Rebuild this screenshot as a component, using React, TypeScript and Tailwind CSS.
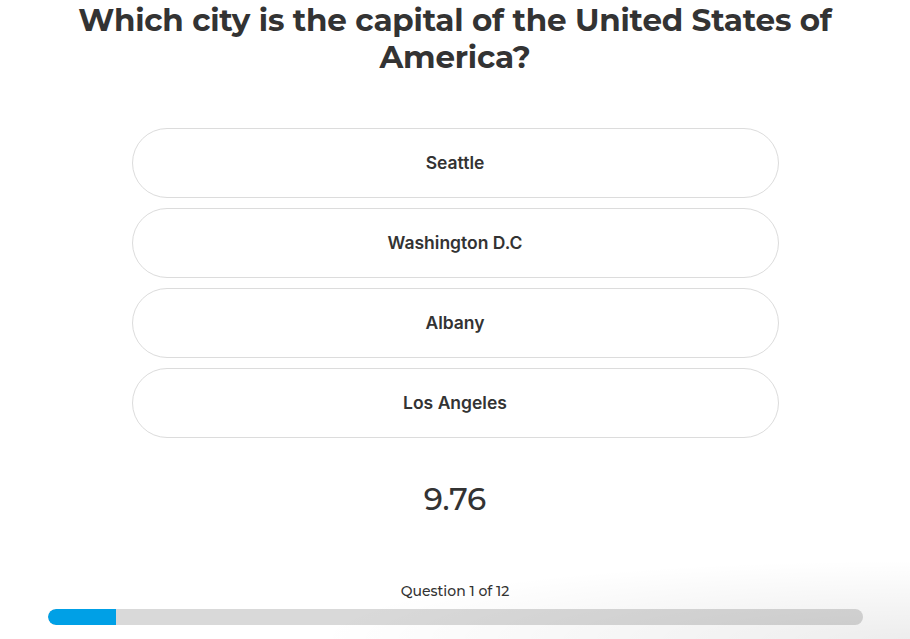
const answers = ['Seattle', 'Washington D.C', 'Albany', 'Los Angeles'];

const App = () => {
  const current = 1;
  const total = 12;

  return (
    <div className="relative h-[639px] w-[910px] overflow-hidden bg-white text-[#333]">
      <h1 className="px-10 pt-[2px] text-center font-['Montserrat','Open_Sans',sans-serif] text-[31px] font-bold leading-[37px] tracking-[-0.2px] text-[#333]">
        Which city is the capital of the United States of America?
      </h1>

      <div className="mx-auto mt-[52px] flex w-[647px] flex-col gap-[10px]">
        {answers.map((answer) => (
          <button
            key={answer}
            className="flex h-[70px] items-center justify-center rounded-full border border-[#dcdcdc] bg-white font-['Inter',sans-serif] text-[17.5px] font-semibold text-[#333]"
          >
            {answer}
          </button>
        ))}
      </div>

      <div className="mt-[41px] text-center font-['Montserrat','Open_Sans',sans-serif] text-[31px] font-medium leading-[40px] text-[#333]">
        9.76
      </div>

      <div className="mt-[62px] text-center font-['Montserrat','Open_Sans',sans-serif] text-[14px] font-medium leading-[20px] text-[#333]">
        Question {current} of {total}
      </div>

      <div className="mt-[8px] ml-[48px] h-[16px] w-[815px] overflow-hidden rounded-full bg-[#d9d9d9]">
        <div className="h-full w-[68px] rounded-l-full bg-[#00a0e6]" />
      </div>

      <div className="pointer-events-none absolute bottom-0 right-0 h-[80px] w-[600px] bg-[radial-gradient(ellipse_at_bottom_right,rgba(0,0,0,0.07),rgba(0,0,0,0)_70%)]" />
    </div>
  );
};

export default App;
